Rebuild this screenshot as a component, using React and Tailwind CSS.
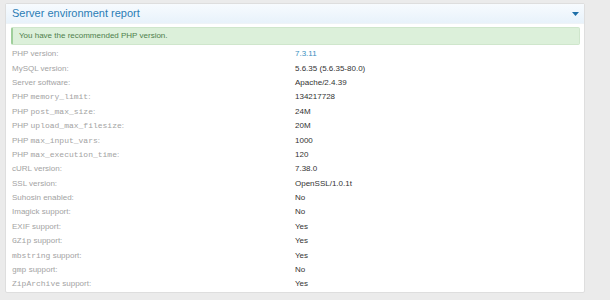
import React from "react";

const M = ({ children }) => (
  <span className="font-['Liberation_Mono',monospace]">{children}</span>
);

const rows = [
  [<>PHP version:</>, "7.3.11", true],
  [<>MySQL version:</>, "5.6.35 (5.6.35-80.0)"],
  [<>Server software:</>, "Apache/2.4.39"],
  [<>PHP <M>memory_limit</M>:</>, "134217728"],
  [<>PHP <M>post_max_size</M>:</>, "24M"],
  [<>PHP <M>upload_max_filesize</M>:</>, "20M"],
  [<>PHP <M>max_input_vars</M>:</>, "1000"],
  [<>PHP <M>max_execution_time</M>:</>, "120"],
  [<>cURL version:</>, "7.38.0"],
  [<>SSL version:</>, "OpenSSL/1.0.1t"],
  [<>Suhosin enabled:</>, "No"],
  [<>Imagick support:</>, "No"],
  [<>EXIF support:</>, "Yes"],
  [<><M>GZip</M> support:</>, "Yes"],
  [<><M>mbstring</M> support:</>, "Yes"],
  [<><M>gmp</M> support:</>, "No"],
  [<><M>ZipArchive</M> support:</>, "Yes"],
];

export default function App() {
  return (
    <div className="w-[610px] h-[300px] bg-[#ebebeb] pt-[3px] pl-[5px] font-['Liberation_Sans',Arial,sans-serif]">
      <div className="w-[580px] h-[290px] bg-white border border-[#dedede] rounded-[2px] flex flex-col">
        <div className="h-[20px] flex items-center justify-between pl-[6px] pr-[5px] bg-gradient-to-b from-[#f7fbfe] to-[#e8f2fb] border-b border-[#eef3f7]">
          <span className="text-[11px] text-[#2b7db5] leading-none">Server environment report</span>
          <svg width="7" height="4" viewBox="0 0 7 4" className="mt-[1px]">
            <polygon points="0,0 7,0 3.5,4" fill="#1e6fa8" />
          </svg>
        </div>
        <div className="mt-[3px] ml-[5px] mr-[4px] h-[18px] bg-[#dcf0da] border border-[#cfe6cc] border-l-[2px] border-l-[#9fcf9b] rounded-[2px] flex items-center pl-[6px]">
          <span className="text-[8px] text-[#4e7f4c] leading-none">You have the recommended PHP version.</span>
        </div>
        <div className="mt-[2px] flex flex-col">
          {rows.map(([label, value, link], i) => (
            <div key={i} className="h-[14.4px] flex items-center text-[8px] leading-none">
              <div className="w-[289px] pl-[6px] text-[#a3a3a3] whitespace-nowrap">{label}</div>
              <div className={link ? "text-[#3a8fc0]" : "text-[#333333]"}>{value}</div>
            </div>
          ))}
        </div>
      </div>
    </div>
  );
}
